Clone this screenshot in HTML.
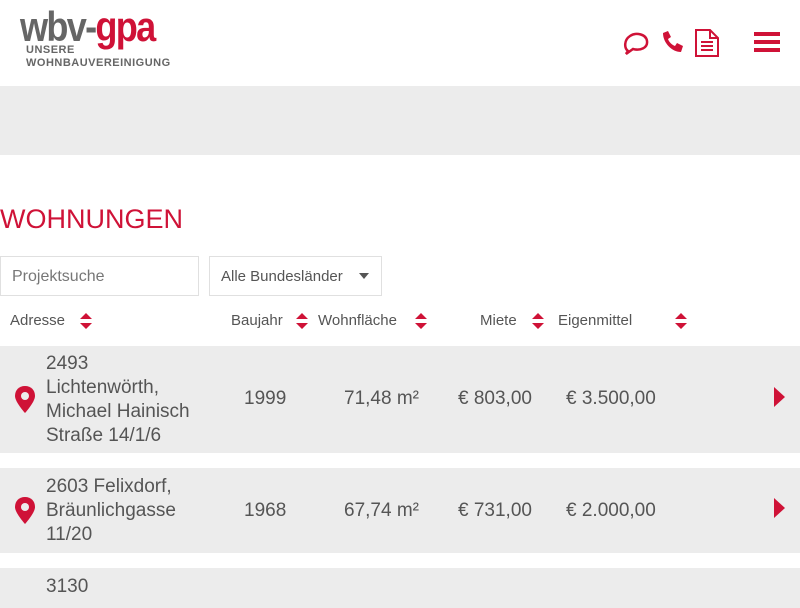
<!DOCTYPE html>
<html><head><meta charset="utf-8"><style>
body{margin:0;width:800px;height:600px;overflow:hidden;background:#fff;font-family:"Liberation Sans",sans-serif;color:#555;position:relative}
.a{position:absolute}
.red{color:#cf1237}
.row{position:absolute;left:0;width:800px;background:#ececec}
.c{position:absolute;font-size:19px;color:#555;line-height:24px}
.h{position:absolute;top:312px;font-size:15px;color:#555}
.s{position:absolute;width:12px;height:18px}
</style></head><body>
<div class="a" style="left:20px;top:6px;font-size:42px;font-weight:bold;letter-spacing:-2px;line-height:42px;transform:scaleX(0.86);transform-origin:0 0"><span style="color:#666">wbv-</span><span class="red">gpa</span></div>
<div class="a" style="left:26px;top:44px;font-size:11px;font-weight:bold;color:#666;line-height:13px;letter-spacing:0.5px">UNSERE<br>WOHNBAUVEREINIGUNG</div>
<svg class="a" style="left:622px;top:30px" width="28" height="26" viewBox="0 0 28 26"><path d="M6 21 C2 18 2 10 8 6 C14 2 24 4 25 11 C26 18 18 21 11 19 L4 24 Z" fill="none" stroke="#cf1237" stroke-width="2.5"/></svg>
<svg class="a" style="left:660px;top:30px" width="24" height="24" viewBox="0 0 24 24"><path d="M3 3 L8 1 L11 7 L8 9 C9 12 12 15 15 16 L17 13 L23 16 L21 22 C12 22 3 13 3 3Z" fill="#cf1237"/></svg>
<svg class="a" style="left:694px;top:28px" width="26" height="30" viewBox="0 0 26 30"><path d="M2 2 H16 L24 10 V28 H2 Z M16 2 V10 H24" fill="none" stroke="#cf1237" stroke-width="2"/><path d="M7 14 H19 M7 18 H19 M7 22 H19" stroke="#cf1237" stroke-width="2"/></svg>
<div class="a" style="left:754px;top:32px;width:26px;height:4px;background:#cf1237;box-shadow:0 8px 0 #cf1237,0 16px 0 #cf1237"></div>
<div class="a" style="left:0;top:86px;width:800px;height:69px;background:#ececec"></div>
<div class="a red" style="left:0;top:204px;font-size:27px">WOHNUNGEN</div>
<div class="a" style="left:0;top:256px;width:197px;height:38px;border:1px solid #e0e0e0;font-size:16px;color:#777;line-height:40px;text-indent:11px">Projektsuche</div>
<div class="a" style="left:209px;top:256px;width:171px;height:38px;border:1px solid #e0e0e0;font-size:15px;color:#555;line-height:40px;text-indent:11px">Alle Bundesländer</div>
<div class="a" style="left:359px;top:273px;border-left:5px solid transparent;border-right:5px solid transparent;border-top:6px solid #555"></div>
<div class="h" style="left:10px">Adresse</div>
<div class="h" style="left:231px">Baujahr</div>
<div class="h" style="left:318px">Wohnfläche</div>
<div class="h" style="left:480px">Miete</div>
<div class="h" style="left:558px">Eigenmittel</div>
<svg width="0" height="0"><defs><g id="ar"><path d="M0 7 L6 1 L12 7Z M0 11 L6 17 L12 11Z" fill="#cf1237"/></g></defs></svg>
<svg class="s" style="left:80px;top:312px"><use href="#ar"/></svg>
<svg class="s" style="left:296px;top:312px"><use href="#ar"/></svg>
<svg class="s" style="left:415px;top:312px"><use href="#ar"/></svg>
<svg class="s" style="left:532px;top:312px"><use href="#ar"/></svg>
<svg class="s" style="left:675px;top:312px"><use href="#ar"/></svg>
<svg width="0" height="0"><defs><g id="pin"><path d="M10 0 C4 0 0 4 0 10 C0 16 10 27 10 27 C10 27 20 16 20 10 C20 4 16 0 10 0Z" fill="#cf1237"/><circle cx="10" cy="10" r="4" fill="#ececec"/></g><g id="tri"><path d="M0 0 L11 10 L0 20Z" fill="#cf1237"/></g></defs></svg>
<div class="row" style="top:346px;height:107px"></div>
<svg class="a" style="left:15px;top:386px" width="20" height="28"><use href="#pin"/></svg>
<div class="c" style="left:46px;top:352px">2493<br>Lichtenwörth,<br>Michael Hainisch<br>Straße 14/1/6</div>
<div class="c" style="left:244px;top:387px">1999</div>
<div class="c" style="left:344px;top:387px">71,48 m²</div>
<div class="c" style="left:458px;top:387px">€ 803,00</div>
<div class="c" style="left:566px;top:387px">€ 3.500,00</div>
<svg class="a" style="left:774px;top:387px" width="12" height="20"><use href="#tri"/></svg>
<div class="row" style="top:468px;height:85px"></div>
<svg class="a" style="left:15px;top:497px" width="20" height="28"><use href="#pin"/></svg>
<div class="c" style="left:46px;top:475px">2603 Felixdorf,<br>Bräunlichgasse<br>11/20</div>
<div class="c" style="left:244px;top:499px">1968</div>
<div class="c" style="left:344px;top:499px">67,74 m²</div>
<div class="c" style="left:458px;top:499px">€ 731,00</div>
<div class="c" style="left:566px;top:499px">€ 2.000,00</div>
<svg class="a" style="left:774px;top:498px" width="12" height="20"><use href="#tri"/></svg>
<div class="row" style="top:568px;height:40px"></div>
<div class="c" style="left:46px;top:575px">3130</div>
</body></html>
